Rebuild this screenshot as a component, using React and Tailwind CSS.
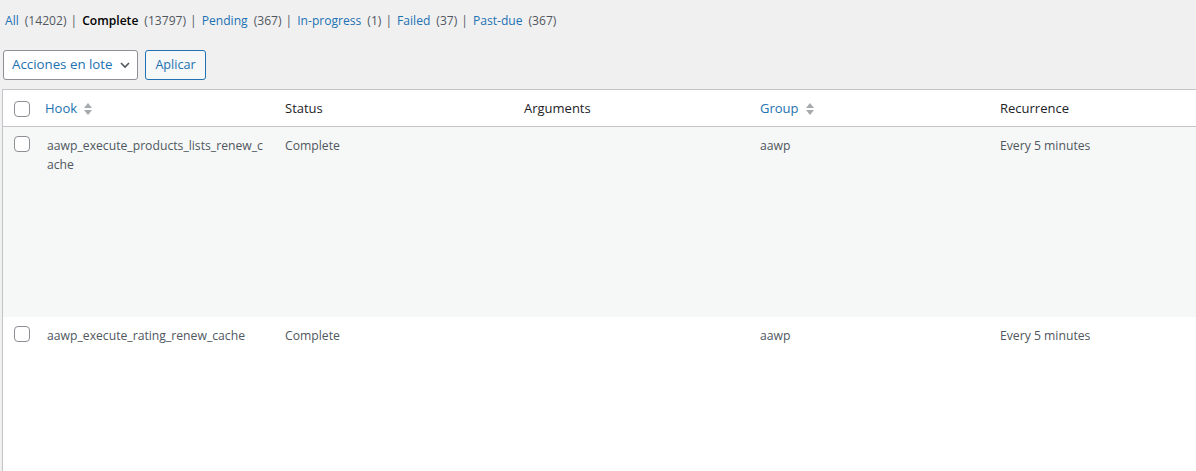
import React from "react";

const font = { fontFamily: '"Open Sans", "Noto Sans", sans-serif' };

function Sort() {
  return (
    <svg width="10" height="16" viewBox="0 0 10 16" className="ml-[6px] inline-block">
      <path d="M1 7 L5 2 L9 7 Z" fill="#a7aaad" />
      <path d="M1 9 L5 14 L9 9 Z" fill="#a7aaad" />
    </svg>
  );
}

function Box() {
  return <span className="block w-4 h-4 rounded-[4px] border border-[#8c8f94] bg-white" />;
}

function Row({ hook, bg, h }) {
  return (
    <div className={`grid grid-cols-[34px_240px_239px_236px_240px_1fr] ${bg} ${h} text-[12.2px] text-[#50575e] leading-[19px]`}>
      <div className="pl-[11px] pt-[9px]"><Box /></div>
      <div className="pl-[10px] pr-[12px] pt-[9px] break-all">{hook}</div>
      <div className="pl-2 pt-[9px]">Complete</div>
      <div className="pl-2 pt-[9px]"></div>
      <div className="pl-2 pt-[9px]">aawp</div>
      <div className="pl-2 pt-[9px] whitespace-nowrap">Every 5 minutes</div>
    </div>
  );
}

function Count({ children }) {
  return <span className="ml-[6px]">{children}</span>;
}
function Sep() {
  return <span className="ml-[4px] mr-[5px]">|</span>;
}

export default function App() {
  return (
    <div className="w-[1196px] h-[471px] overflow-hidden bg-[#f0f0f1]" style={font}>
      <div className="flex items-center pl-[5px] pt-[11px] text-[12.1px] leading-[20px] text-[#50575e] whitespace-nowrap">
        <a className="text-[#2271b1]">All</a><Count>(14202)</Count><Sep />
        <span className="font-semibold text-black">Complete</span><Count>(13797)</Count><Sep />
        <a className="text-[#2271b1]">Pending</a><Count>(367)</Count><Sep />
        <a className="text-[#2271b1]">In-progress</a><Count>(1)</Count><Sep />
        <a className="text-[#2271b1]">Failed</a><Count>(37)</Count><Sep />
        <a className="text-[#2271b1]">Past-due</a><Count>(367)</Count>
      </div>
      <div className="flex items-center gap-[7px] pl-[3px] mt-[19px]">
        <div className="flex items-center justify-between w-[135px] h-[30px] pl-[8px] pr-[6px] rounded-[3px] border border-[#8c8f94] bg-white text-[13.3px] text-[#2271b1]">
          <span>Acciones en lote</span>
          <svg width="12" height="12" viewBox="0 0 12 12"><path d="M2 4 L6 8 L10 4" stroke="#50575e" strokeWidth="1.6" fill="none" /></svg>
        </div>
        <div className="flex items-center justify-center w-[61px] h-[30px] rounded-[3px] border border-[#2271b1] bg-[#f6f7f7] text-[12.6px] text-[#2271b1]">Aplicar</div>
      </div>
      <div className="ml-[2px] mt-[9px] border-t border-l border-[#c3c4c7] bg-white">
        <div className="grid grid-cols-[34px_240px_239px_236px_240px_1fr] h-[37px] pt-[1px] border-b border-[#c3c4c7] text-[13px] text-[#1d2327] items-center">
          <div className="pl-[11px]"><Box /></div>
          <div className="pl-[8px] flex items-center text-[#2271b1]">Hook<Sort /></div>
          <div className="pl-2">Status</div>
          <div className="pl-2">Arguments</div>
          <div className="pl-2 flex items-center text-[#2271b1]">Group<Sort /></div>
          <div className="pl-2">Recurrence</div>
        </div>
        <Row hook="aawp_execute_products_lists_renew_cache" bg="bg-[#f6f7f7]" h="h-[190px]" />
        <Row hook="aawp_execute_rating_renew_cache" bg="bg-white" h="h-[200px]" />
      </div>
    </div>
  );
}
